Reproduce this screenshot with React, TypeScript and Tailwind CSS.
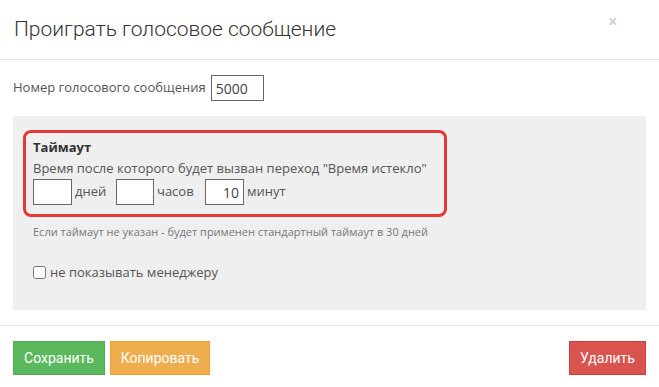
import { useState } from 'react'

export default function App() {
  const [num, setNum] = useState('5000')
  const [days, setDays] = useState('')
  const [hours, setHours] = useState('')
  const [mins, setMins] = useState('10')
  const [hide, setHide] = useState(false)

  const box = 'h-[26px] border border-[#666] bg-white px-1 text-[14px] text-[#444] outline-none'

  return (
    <div className="w-[659px] h-[387px] bg-white font-['Open_Sans',sans-serif] text-[#555] relative overflow-hidden">
      <div className="h-[60px] border-b border-[#e5e5e5] flex items-center pl-[14px] pr-4">
        <h4 className="font-['Roboto',sans-serif] font-light text-[21px] text-[#333]">Проиграть голосовое сообщение</h4>
        <button className="absolute right-[42px] top-[10px] text-[16px] text-[#c8c8c8] font-['Roboto',sans-serif]">×</button>
      </div>

      <div className="px-[13px] pt-[15px]">
        <div className="flex items-center gap-[5px] text-[13px]">
          <span>Номер голосового сообщения</span>
          <input value={num} onChange={e => setNum(e.target.value)} className={box + ' w-[53px]'} />
        </div>

        <div className="mt-[15px] bg-[#efefef] h-[194px] pt-[14px] px-[10px]">
          <div className="w-[424px] h-[87px] border-[3px] border-[#e53935] rounded-[8px] px-[7px] pt-[5px]">
            <div className="font-bold text-[13px] text-[#333]">Таймаут</div>
            <div className="text-[13px] mt-[1px]">Время после которого будет вызван переход "Время истекло"</div>
            <div className="flex items-center text-[13px] mt-[1px]">
              <input value={days} onChange={e => setDays(e.target.value)} className={box + ' w-[39px]'} />
              <span className="ml-[3px] w-[41px]">дней</span>
              <input value={hours} onChange={e => setHours(e.target.value)} className={box + ' w-[38px]'} />
              <span className="ml-[3px] w-[48px]">часов</span>
              <input value={mins} onChange={e => setMins(e.target.value)} className={box + ' w-[39px] text-right'} />
              <span className="ml-[3px]">минут</span>
            </div>
          </div>
          <div className="text-[11px] text-[#777] pl-[10px] mt-[7px]">Если таймаут не указан - будет применен стандартный таймаут в 30 дней</div>
          <label className="flex items-center gap-[4px] pl-[10px] mt-[22px] text-[13px]">
            <input type="checkbox" checked={hide} onChange={e => setHide(e.target.checked)} className="w-[13px] h-[13px] m-0" />
            <span>не показывать менеджеру</span>
          </label>
        </div>
      </div>

      <div className="mt-[15px] border-t border-[#e5e5e5] flex items-center px-[13px] pt-[15px] font-['Roboto',sans-serif] text-[14px] text-white">
        <button className="h-[34px] w-[92px] bg-[#5cb85c] border border-[#4cae4c]">Сохранить</button>
        <button className="ml-[5px] h-[34px] w-[100px] bg-[#f0ad4e] border border-[#eea236]">Копировать</button>
        <button className="ml-auto h-[34px] w-[77px] bg-[#d9534f] border border-[#d43f3a]">Удалить</button>
      </div>
    </div>
  )
}
